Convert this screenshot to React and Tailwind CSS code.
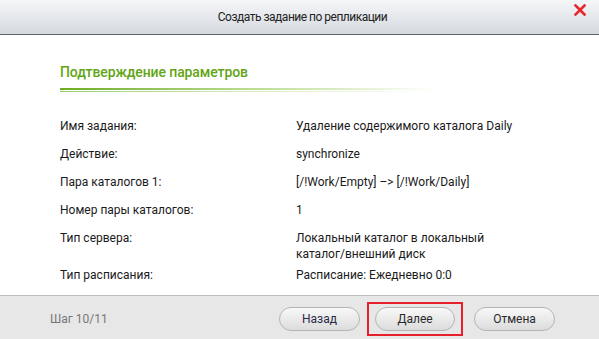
export default function App() {
  const rows = [
    ["Имя задания:", "Удаление содержимого каталога Daily"],
    ["Действие:", "synchronize"],
    ["Пара каталогов 1:", "[/!Work/Empty] –> [/!Work/Daily]"],
    ["Номер пары каталогов:", "1"],
    ["Тип сервера:", "Локальный каталог в локальный каталог/внешний диск"],
    ["Тип расписания:", "Расписание: Ежедневно 0:0"],
  ];
  return (
    <div className="w-[599px] h-[339px] flex flex-col bg-white overflow-hidden" style={{ fontFamily: "Roboto, 'Noto Sans', sans-serif" }}>
      <div className="relative h-[35px] shrink-0 flex items-center justify-center bg-gradient-to-b from-[#f5f6f8] to-[#d5d9df] border-b border-[#5c6067]">
        <span className="ml-[6px] text-[12px] text-[#222] tracking-[-0.5px]">Создать задание по репликации</span>
        <svg className="absolute right-[13px] top-[4px]" width="12" height="12" viewBox="0 0 12 12">
          <path d="M1.5 1.5 L10.5 10.5 M10.5 1.5 L1.5 10.5" stroke="#e8262c" strokeWidth="2.6" strokeLinecap="square" />
        </svg>
      </div>
      <div className="flex-1 flex flex-col pl-[60px] pt-[27px]">
        <div className="text-[14px] font-medium text-[#62a515] tracking-[-0.1px] leading-[20px]">Подтверждение параметров</div>
        <div className="mt-[6px] w-[376px] h-[2px] bg-gradient-to-r from-[#6cad1d] via-[#b9dc8f] to-transparent" />
        <div className="mt-[1px] w-[376px] h-[1px] bg-gradient-to-r from-[#9ccb68] via-[#d6ecbd] to-transparent" />
        <div className="mt-[26px] flex flex-col text-[12px] leading-[16px] text-[#1a1a1a]">
          {rows.map(([l, v]) => (
            <div key={l} className="flex min-h-[28px] pb-[5px]">
              <div className="w-[236px] shrink-0">{l}</div>
              <div className="w-[230px]">{v}</div>
            </div>
          ))}
        </div>
      </div>
      <div className="h-[47px] shrink-0 bg-[#e7e7e7] border-t border-[#bdbdbd] flex items-center pl-[50px]">
        <span className="text-[12px] text-[#777]">Шаг 10/11</span>
        <div className="ml-auto mr-[44px] flex items-center">
          <button className="w-[81px] h-[24px] rounded-full border border-[#b4b4b4] bg-gradient-to-b from-[#f8f8f8] to-[#dcdcdc] text-[12px] text-[#2a2a4a]">Назад</button>
          <div className="ml-[7px] border-2 border-[#e8202c] px-[6px] py-[3px]">
            <button className="block w-[80px] h-[24px] rounded-full border border-[#b4b4b4] bg-gradient-to-b from-[#f8f8f8] to-[#dcdcdc] text-[12px] text-[#2a2a2a]">Далее</button>
          </div>
          <button className="ml-[11px] w-[81px] h-[24px] rounded-full border border-[#b4b4b4] bg-gradient-to-b from-[#f8f8f8] to-[#dcdcdc] text-[12px] text-[#2a2a2a]">Отмена</button>
        </div>
      </div>
    </div>
  );
}
